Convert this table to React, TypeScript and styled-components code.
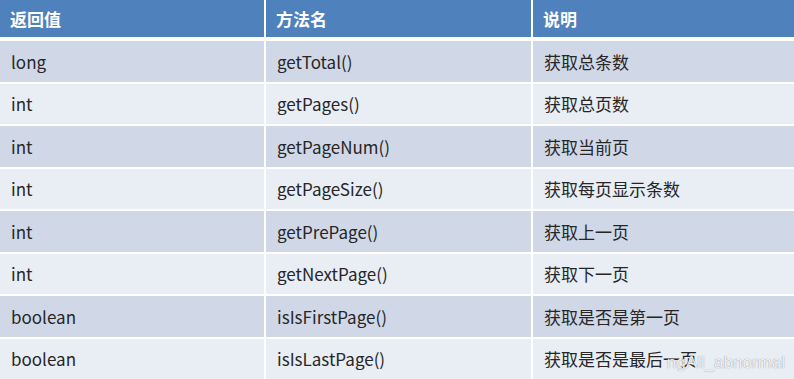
import React from 'react';
import styled, { createGlobalStyle } from 'styled-components';

const GlobalStyle = createGlobalStyle`
  html, body {
    margin: 0;
    padding: 0;
    background: #ffffff;
  }
  body {
    font-family: "Noto Sans CJK SC", "Noto Sans", sans-serif;
  }
`;

const Table = styled.div`
  position: relative;
  width: 794px;
  height: 379px;
  display: flex;
  flex-direction: column;
  gap: 4px;
  background: #ffffff;
  overflow: hidden;
`;

const Columns = `
  display: grid;
  grid-template-columns: 264px 265px 1fr;
  column-gap: 2px;
`;

const HeaderRow = styled.div`
  ${Columns}
  height: 37px;
`;

const HeaderCell = styled.div`
  background: #4f81bd;
  color: #ffffff;
  font-weight: 700;
  font-size: 17px;
  display: flex;
  align-items: center;
  padding-left: 10px;
`;

const Body = styled.div`
  flex: 1;
  display: grid;
  grid-template-rows: repeat(8, 1fr);
  row-gap: 2px;
`;

const Row = styled.div`
  ${Columns}
`;

const Cell = styled.div<{ $odd: boolean }>`
  background: ${({ $odd }) => ($odd ? '#d0d8e8' : '#e9edf4')};
  color: #262626;
  font-size: 17px;
  display: flex;
  align-items: center;
  padding-left: 11px;
`;

// faint site watermark lying over the last row
const Watermark = styled.div`
  position: absolute;
  right: 9px;
  bottom: 6px;
  font-family: "Liberation Sans", Arial, sans-serif;
  font-size: 17px;
  color: rgba(255, 255, 255, 0.9);
  text-shadow: 0 0 1px rgba(0, 0, 0, 0.5);
  pointer-events: none;
`;

const rows = [
  ['long', 'getTotal()', '获取总条数'],
  ['int', 'getPages()', '获取总页数'],
  ['int', 'getPageNum()', '获取当前页'],
  ['int', 'getPageSize()', '获取每页显示条数'],
  ['int', 'getPrePage()', '获取上一页'],
  ['int', 'getNextPage()', '获取下一页'],
  ['boolean', 'isIsFirstPage()', '获取是否是第一页'],
  ['boolean', 'isIsLastPage()', '获取是否是最后一页'],
];

const App: React.FC = () => {
  return (
    <>
      <GlobalStyle />
      <Table>
        <HeaderRow>
          <HeaderCell>返回值</HeaderCell>
          <HeaderCell>方法名</HeaderCell>
          <HeaderCell>说明</HeaderCell>
        </HeaderRow>
        <Body>
          {rows.map((r, i) => (
            <Row key={i}>
              {r.map((c, j) => (
                <Cell key={j} $odd={i % 2 === 0}>
                  {c}
                </Cell>
              ))}
            </Row>
          ))}
        </Body>
        <Watermark>ngAll_abnormal</Watermark>
      </Table>
    </>
  );
};

export default App;
